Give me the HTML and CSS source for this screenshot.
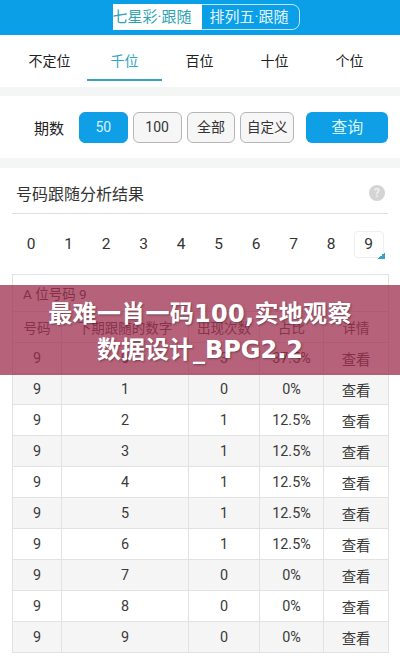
FILE: index.html
```html
<!DOCTYPE html>
<html lang="zh">
<head>
<meta charset="utf-8">
<title>号码跟随分析</title>
<link rel="stylesheet" href="styles.css">
</head>
<body>
<header class="top">
  <div class="switch">
    <div class="sw sw-on">七星彩·跟随</div>
    <div class="sw">排列五·跟随</div>
  </div>
</header>
<nav class="tabs">
  <div class="tab">不定位</div>
  <div class="tab tab-on">千位</div>
  <div class="tab">百位</div>
  <div class="tab">十位</div>
  <div class="tab">个位</div>
</nav>
<section class="filter">
  <span class="flabel">期数</span>
  <div class="chip chip-on">50</div>
  <div class="chip">100</div>
  <div class="chip">全部</div>
  <div class="chip chip-wide">自定义</div>
  <div class="query">查询</div>
</section>
<section class="result">
  <div class="rhead">
    <h2 class="rtitle">号码跟随分析结果</h2>
    <div class="help">?</div>
  </div>
  <div class="digits">
    <div class="d">0</div><div class="d">1</div><div class="d">2</div><div class="d">3</div><div class="d">4</div>
    <div class="d">5</div><div class="d">6</div><div class="d">7</div><div class="d">8</div>
    <div class="d d-on">9<span class="corner"></span></div>
  </div>
  <table class="tbl">
    <colgroup><col class="c1"><col class="c2"><col class="c3"><col class="c4"><col class="c5"></colgroup>
    <thead>
      <tr class="cap"><th colspan="5">A 位号码 9</th></tr>
      <tr class="hd"><th>号码</th><th>下期跟随的数字</th><th>出现次数</th><th>占比</th><th>详情</th></tr>
    </thead>
    <tbody>
      <tr><td>9</td><td>0</td><td>3</td><td>37.5%</td><td>查看</td></tr>
      <tr><td>9</td><td>1</td><td>0</td><td>0%</td><td>查看</td></tr>
      <tr><td>9</td><td>2</td><td>1</td><td>12.5%</td><td>查看</td></tr>
      <tr><td>9</td><td>3</td><td>1</td><td>12.5%</td><td>查看</td></tr>
      <tr><td>9</td><td>4</td><td>1</td><td>12.5%</td><td>查看</td></tr>
      <tr><td>9</td><td>5</td><td>1</td><td>12.5%</td><td>查看</td></tr>
      <tr><td>9</td><td>6</td><td>1</td><td>12.5%</td><td>查看</td></tr>
      <tr><td>9</td><td>7</td><td>0</td><td>0%</td><td>查看</td></tr>
      <tr><td>9</td><td>8</td><td>0</td><td>0%</td><td>查看</td></tr>
      <tr><td>9</td><td>9</td><td>0</td><td>0%</td><td>查看</td></tr>
    </tbody>
  </table>
</section>
<div class="banner">最难一肖一码100,实地观察<br><span class="banner-sub">数据设计_BPG2.2</span></div>
</body>
</html>
```
FILE: styles.css
```css
* { box-sizing: border-box; }
html, body { margin: 0; padding: 0; }
body {
  width: 400px; height: 660px; overflow: hidden; position: relative;
  background: #fff; color: #222;
  font-family: "Roboto", "Noto Sans CJK SC", sans-serif;
}
.top {
  height: 35px; background: #0a9fe6;
  display: flex; justify-content: center; padding: 4px 0 0 12px;
}
.switch {
  width: 187px; height: 26px; display: flex;
  border: 1px solid #bfe6f8; border-radius: 0 8px 8px 0;
}
.sw { flex: 1; font-size: 15px; line-height: 24px; color: #e4f5fd; text-align: left; padding-left: 8px; white-space: nowrap; }
.sw-on { flex: 0 0 89px; background: #fff; color: #2ea3b4; margin: -1px 0 -1px -1px; line-height: 26px; padding-left: 0; }
.tabs { height: 52px; display: flex; padding: 0 12px; }
.tab { width: 75px; height: 46px; font-size: 14px; line-height: 25px; padding-top: 14px; text-align: center; color: #222; }
.tab-on { color: #2ea3c4; border-bottom: 2px solid #36a2c4; }
.filter {
  border-top: 9px solid #f4f5f5; border-bottom: 10px solid #f4f5f5;
  height: 81px; display: flex; align-items: center; padding: 1px 12px 0 34px;
}
.flabel { font-size: 15px; width: 45px; color: #222; }
.chip {
  width: 49px; height: 31px; margin-right: 5px; border: 1px solid #b5b5b5; border-radius: 6px;
  background: #f6f6f6; font-size: 14px; line-height: 29px; text-align: center; color: #333;
}
.chip-wide { width: 54px; margin-right: 12px; font-size: 13.5px; }
.chip-on { background: #0e9fe6; border-color: #0e9fe6; color: #d8f1fb; }
.query {
  width: 82px; height: 31px; border-radius: 6px; background: #0e9fe6; color: #d8f6f6;
  font-size: 16px; line-height: 31px; text-align: center;
}
.result { padding: 0 12px; }
.rhead {
  height: 46px; display: flex; align-items: center; justify-content: space-between;
  border-bottom: 1px solid #dedede; padding: 5px 3px 0 4px;
}
.rtitle { margin: 0; font-size: 16px; font-weight: 400; color: #333; }
.help {
  width: 16px; height: 16px; border-radius: 50%; background: #d4d4d4; color: #eee;
  font-size: 12px; line-height: 16px; text-align: center; font-weight: 700;
}
.digits { height: 60px; display: flex; justify-content: space-between; padding: 17px 0 0 0; margin: 0 4.5px 0 4px; }
.d { width: 30px; height: 27px; font-size: 15.5px; line-height: 25px; text-align: center; color: #333; position: relative; border: 1px solid transparent; }
.d-on { border-color: #eee; border-radius: 4px; }
.corner {
  position: absolute; right: -2px; bottom: -2px; width: 7px; height: 7px;
  background: linear-gradient(135deg, transparent 50%, #36a2c4 50%);
}
.tbl {
  width: 376px; table-layout: fixed; border-collapse: collapse; border: 1px solid #dcdcdc;
  font-size: 14.4px; color: #3a3a3a;
}
.c1 { width: 49px; } .c2 { width: 127px; } .c3 { width: 71px; } .c4 { width: 64px; } .c5 { width: 65px; }
.tbl th, .tbl td { border: 1px solid #e2e2e2; padding: 0; text-align: center; font-weight: 400; height: 31px; }
.tbl .cap th { height: 37px; text-align: left; padding-left: 10px; font-size: 13.5px; }
.tbl .hd th { height: 31px; color: #444; font-size: 13.5px; }
.tbl tbody tr:nth-child(even) td { background: #f5f5f5; }
.banner {
  position: absolute; left: 0; top: 285px; width: 400px; height: 90px;
  background: rgba(156, 46, 78, 0.75); color: #fff; text-align: center;
  font-family: "DejaVu Sans", "Noto Sans CJK SC", sans-serif; font-weight: 700; font-size: 24px; line-height: 36px; padding-top: 11px;
  letter-spacing: 0.3px;
  text-shadow: 1px 1px 2px rgba(0,0,0,.35);
}
.banner-sub { letter-spacing: 0; }
```
